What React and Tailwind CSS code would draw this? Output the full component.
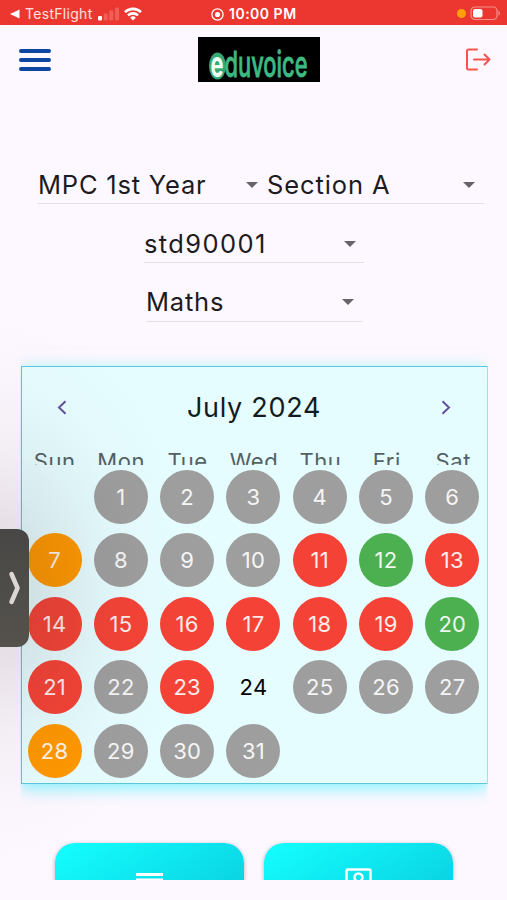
import React, { useState } from 'react';
import clsx from 'clsx';

const WEEKDAYS = ['Sun', 'Mon', 'Tue', 'Wed', 'Thu', 'Fri', 'Sat'];

// July 2024 starts on a Monday
const FIRST_WEEKDAY = 1;
const DAYS_IN_MONTH = 31;
const TODAY = 24;

const STATUS = {
  absent: [11, 13, 14, 15, 16, 17, 18, 19, 21, 23],
  present: [12, 20],
  partial: [7, 28],
};

const dayClass = (day) => {
  if (day === TODAY) return 'text-black';
  if (STATUS.absent.includes(day)) return 'bg-[#f44336] text-white/90';
  if (STATUS.present.includes(day)) return 'bg-[#4caf50] text-white/90';
  if (STATUS.partial.includes(day)) return 'bg-[#ff9800] text-white/90';
  return 'bg-[#9e9e9e] text-white/90';
};

const StatusBar = () => (
  <div className="flex h-[25px] items-center bg-[#eb372f] text-white">
    <div className="flex w-[210px] items-center pl-[10px] pt-[3px]">
      <svg width="10" height="10" viewBox="0 0 10 10" fill="currentColor">
        <path d="M0 5 9.5 0.5v9z" />
      </svg>
      <span className="ml-[5px] w-[68px] whitespace-nowrap text-[14px] leading-5 tracking-[0.3px] text-white/85">TestFlight</span>
      <svg className="ml-[5px]" width="21" height="14" viewBox="0 0 21 14" fill="currentColor">
        <rect x="0" y="9" width="4" height="4.5" rx="1" />
        <rect x="5.7" y="6.5" width="4" height="7" rx="1" opacity=".2" />
        <rect x="11.3" y="3.5" width="4" height="10" rx="1" opacity=".2" />
        <rect x="17" y="0.5" width="4" height="13" rx="1" opacity=".2" />
      </svg>
      <svg className="ml-[5px]" width="18" height="14" viewBox="0 0 18 14" fill="none" stroke="currentColor" strokeWidth="2.6">
        <path d="M1 5.2a11.3 11.3 0 0 1 16 0" />
        <path d="M4 8.4a7.1 7.1 0 0 1 10 0" />
        <path d="M9 13.5 6.2 10.7a4 4 0 0 1 5.6 0z" fill="currentColor" stroke="none" />
      </svg>
    </div>
    <div className="flex flex-1 items-center pt-[3px] pl-[1px]">
      <svg width="13" height="13" viewBox="0 0 13 13" fill="none" stroke="currentColor" strokeWidth="1.3">
        <circle cx="6.5" cy="6.5" r="5.6" />
        <circle cx="6.5" cy="6.5" r="2.6" fill="currentColor" stroke="none" />
      </svg>
      <span className="ml-[5px] whitespace-nowrap text-[14px] leading-5 font-semibold tracking-[0.5px]">10:00 PM</span>
    </div>
    <div className="flex items-center pr-[6px] pt-[2px]">
      <span className="mr-[4px] h-[9px] w-[9px] rounded-full bg-[#ff9f0a]" />
      <svg width="31" height="15" viewBox="0 0 31 15" fill="none">
        <rect x="1" y="1" width="26" height="12.5" rx="4" stroke="#fff" strokeOpacity=".45" strokeWidth="1.2" />
        <rect x="3" y="3" width="9.5" height="8.5" rx="2" fill="#fff" />
        <path d="M28.5 5v4.5c1.8-.6 1.8-3.9 0-4.5z" fill="#fff" fillOpacity=".5" />
      </svg>
    </div>
  </div>
);

const Header = () => (
  <header className="flex h-[70px] items-center justify-between pl-[19px] pr-[16px]">
    <button className="flex w-8 flex-col gap-[5px]">
      <span className="h-[4px] rounded-full bg-[#0d47a1]" />
      <span className="h-[4px] rounded-full bg-[#0d47a1]" />
      <span className="h-[4px] rounded-full bg-[#0d47a1]" />
    </button>
    <div className="-mt-px ml-[2px] flex h-[45px] w-[122px] items-center justify-center bg-black">
      <svg width="102" height="41" viewBox="0 0 102 41">
        <ellipse cx="9.5" cy="27" rx="8.5" ry="13.5" fill="#35a873" />
        <g fontFamily="Inter, sans-serif">
          <text x="2.5" y="37.5" fontSize="36" fontWeight="700" textLength="13" lengthAdjust="spacingAndGlyphs" fill="#effff4">e</text>
          <text x="16.5" y="37.5" fontSize="36" fontWeight="500" textLength="83" lengthAdjust="spacingAndGlyphs" fill="#3dba83" stroke="#3dba83" strokeWidth="0.8">duvoice</text>
        </g>
      </svg>
    </div>
    <button>
      <svg width="26" height="24" viewBox="0 0 26 24" fill="none" stroke="#f9524f" strokeWidth="2" strokeLinecap="round" strokeLinejoin="round">
        <path d="M12 1.5H3.5A1.5 1.5 0 0 0 2 3v17a1.5 1.5 0 0 0 1.5 1.5H12" />
        <path d="M9 11.5h15.5M19.5 6.5l5 5-5 5" />
      </svg>
    </button>
  </header>
);

const Dropdown = ({ label, className }) => (
  <div className={clsx('flex items-center justify-between border-b border-[#e4dfe7] text-[#1d1b20]', className)}>
    <span className="-mt-[2px] whitespace-nowrap text-[25.5px] leading-[34px]">{label}</span>
    <svg className="-mt-[2px]" width="12" height="6" viewBox="0 0 12 6" fill="#66636a">
      <path d="M0 0h12L6 6z" />
    </svg>
  </div>
);

const Calendar = () => {
  const [month] = useState('July 2024');
  const days = Array.from({ length: DAYS_IN_MONTH }, (_, i) => i + 1);

  return (
    <section className="ml-[20.5px] h-[418px] w-[467px] border border-[#5cc6dc] bg-[#e6fdff] shadow-[0_4px_16px_0_rgba(0,240,255,0.5)] [clip-path:inset(-20px_0)]">
      <div className="flex h-[81px] items-center justify-between pl-[35px] pr-[35px]">
        <svg width="10" height="15" viewBox="0 0 10 15" fill="none" stroke="#65509c" strokeWidth="2">
          <path d="M8.5 1.2 2 7.5l6.5 6.3" />
        </svg>
        <h2 className="pt-[2px] text-[27px] tracking-[0.7px] text-[#121c1e]">{month}</h2>
        <svg width="10" height="15" viewBox="0 0 10 15" fill="none" stroke="#65509c" strokeWidth="2">
          <path d="M1.5 1.2 8 7.5l-6.5 6.3" />
        </svg>
      </div>
      {/* labels are cut off by the fixed row height */}
      <div className="grid h-[17px] grid-cols-7 overflow-hidden text-center text-[22px] leading-[26px] tracking-[0.6px] text-[#536163]">
        {WEEKDAYS.map((name) => (
          <span key={name}>{name}</span>
        ))}
      </div>
      <div className="grid auto-rows-[63.5px] grid-cols-7 place-items-center pr-px">
        {Array.from({ length: FIRST_WEEKDAY }, (_, i) => (
          <span key={`blank-${i}`} />
        ))}
        {days.map((day) => (
          <span
            key={day}
            className={clsx('flex h-[54px] w-[54px] items-center justify-center rounded-full pt-px text-[22px] tracking-[0.3px]', dayClass(day))}
          >
            {day}
          </span>
        ))}
      </div>
    </section>
  );
};

const ActionCard = ({ children }) => (
  <button className="flex h-[38px] w-[189px] justify-center overflow-hidden rounded-t-[20px] bg-linear-150 from-[#14ffff] to-[#0ad4e3] shadow-[0_1px_4px_rgba(0,0,0,0.3)]">
    {children}
  </button>
);

export default function App() {
  return (
    <div className="relative flex h-[900px] w-[507px] flex-col overflow-hidden bg-[#fdf8ff] font-['Inter',sans-serif]">
      <StatusBar />
      <Header />

      <div className="mt-[73px] flex pl-[37px]">
        <Dropdown label="MPC 1st Year" className="h-[36px] w-[229px] pr-[8px] pl-[1px] tracking-[0.8px]" />
        <Dropdown label="Section A" className="h-[36px] w-[218px] pr-[9px] pl-[1px] tracking-[0.9px]" />
      </div>
      <Dropdown label="std90001" className="mt-[23px] ml-[144px] h-[36px] w-[220px] pr-[8px] tracking-[1.4px]" />
      <Dropdown label="Maths" className="mt-[22px] ml-[146px] h-[37px] w-[216px] pr-[8px] tracking-[0.8px]" />

      <div className="mt-[44px]">
        <Calendar />
      </div>

      <div className="mt-[48px] flex h-[48px] gap-[20px] overflow-hidden pt-[11px] pl-[55px]">
        <ActionCard>
          <svg className="mt-[30px]" width="27" height="8" viewBox="0 0 27 8" fill="#fff">
            <rect width="27" height="3" />
            <rect y="5.5" width="27" height="3" />
          </svg>
        </ActionCard>
        <ActionCard>
          <svg className="mt-[25px]" width="27" height="13" viewBox="0 0 27 13" fill="none" stroke="#fff" strokeWidth="2.5">
            <path d="M1.5 14V3a1.5 1.5 0 0 1 1.5-1.5h21A1.5 1.5 0 0 1 25.5 3v11" />
            <circle cx="13.5" cy="9.5" r="4" />
          </svg>
        </ActionCard>
      </div>

      {/* drawer handle floating over the page, with its wide soft shade */}
      <div className="pointer-events-none absolute top-[310px] left-0 h-[560px] w-[190px] bg-[radial-gradient(190px_280px_at_left,rgba(60,35,45,0.15)_0%,rgba(60,35,45,0.11)_25%,rgba(60,35,45,0.05)_50%,rgba(60,35,45,0.015)_75%,transparent_100%)]" />
      <div className="absolute top-[529px] left-[-20px] flex h-[118px] w-[49px] items-center justify-end rounded-[12px] bg-linear-to-b from-[#484745] to-[#55524d] pr-[8px]">
        <svg width="13" height="34" viewBox="0 0 13 34" fill="none" stroke="#dcd6d6" strokeWidth="4.5" strokeLinecap="round" strokeLinejoin="round">
          <path d="M3.5 3 9.5 17 3.5 31" />
        </svg>
      </div>
    </div>
  );
}
